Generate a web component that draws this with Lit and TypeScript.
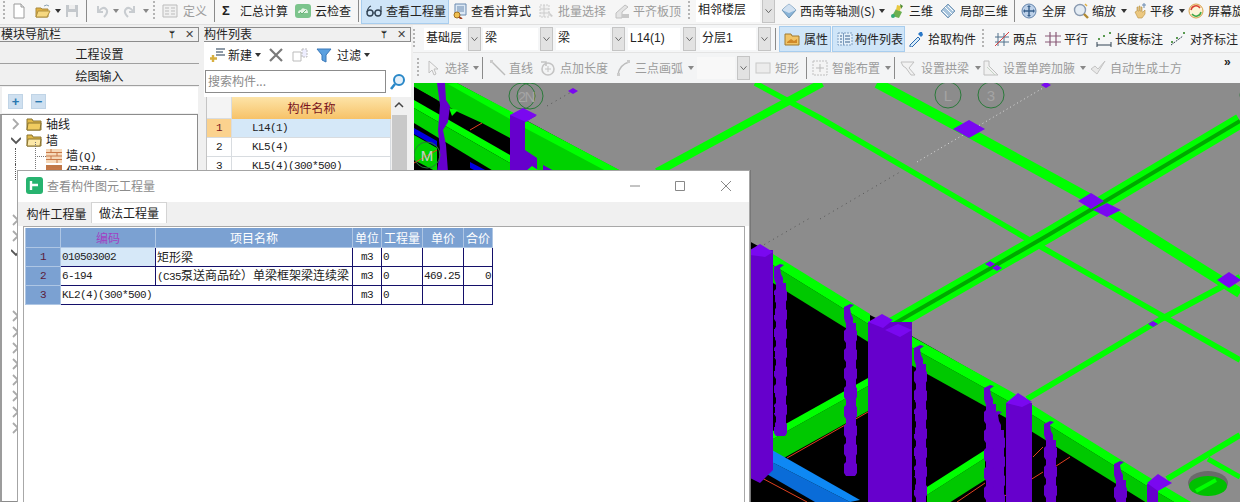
import { LitElement, css, html, svg } from 'lit'
import { customElement } from 'lit/decorators.js'

const icons: Record<string, any> = {
  new: svg`<path d="M3 1h7l3 3v11H3z" fill="#fff" stroke="#9a9a9a"/><path d="M10 1v3h3" fill="#e8e8e8" stroke="#9a9a9a"/>`,
  open: svg`<path d="M1 5h5l1 1h6v8H1z" fill="#e0b040" stroke="#a88a40"/><path d="M3 8h12l-3 6H1z" fill="#f6d880" stroke="#b09040"/><path d="M9 3q3-2 5 0" fill="none" stroke="#8aa0b0"/>`,
  save: svg`<path d="M2 2h12v12H2z" fill="#c4c8cc"/><path d="M5 2h6v4H5z" fill="#eee"/><path d="M4 9h8v5H4z" fill="#f4f4f4"/>`,
  undo: svg`<path d="M4 3v6h5M5 8q4-5 7-2t-2 8" fill="none" stroke="#c8ccd0" stroke-width="2"/>`,
  redo: svg`<path d="M12 3v6H7M11 8Q7 3 4 6t2 8" fill="none" stroke="#c8ccd0" stroke-width="2"/>`,
  define: svg`<path d="M1 2h14v12H1z" fill="#f0f0f0" stroke="#bbb"/><path d="M3 5h4M3 8h4M3 11h4M9 5h4M9 8h4M9 11h4" stroke="#bbb"/>`,
  cloud: svg`<rect x="0" y="1" width="16" height="14" rx="3" fill="#7cc48c"/><path d="M3 10q0-3 3-3 1-3 4-1 3 0 3 4z" fill="#e4f4e4"/><path d="M5 9l2 2 4-4" fill="none" stroke="#6ab07a"/>`,
  glass: svg`<circle cx="4" cy="10" r="3" fill="none" stroke="#345" stroke-width="1.400"/><circle cx="12" cy="10" r="3" fill="none" stroke="#345" stroke-width="1.400"/><path d="M1 9q1-5 4-6M15 9V3M7 10h2" fill="none" stroke="#345" stroke-width="1.200"/>`,
  calc: svg`<path d="M3 1h11v11H3z" fill="#dce8f4" stroke="#6a8ab0"/><path d="M5 4h7M5 6h7M5 8h7" stroke="#6a8ab0"/><circle cx="5" cy="12" r="3" fill="#f0c050" stroke="#a07020"/><path d="M7 14l3 2" stroke="#a04020" stroke-width="2"/>`,
  batch: svg`<path d="M2 2h9v12H2z" fill="#f2f2f2" stroke="#ccc" stroke-dasharray="2 1"/><path d="M2 6h9M2 10h9M6 2v12" stroke="#ccc"/><path d="M10 8l5 5-2 1z" fill="#ccc"/>`,
  level: svg`<path d="M2 10l9-8 3 2-6 5v6H2z" fill="#e4e4e4" stroke="#c0c0c0"/><path d="M8 11h7v4H8z" fill="#c8c8c8"/>`,
  cube: svg`<path d="M8 1l7 6-7 8-7-8z" fill="#8ab4d8" stroke="#6890b0"/><path d="M1 7l7 3 7-3-7-6z" fill="#d0e0f0"/>`,
  three: svg`<path d="M3 13l4-7 6 3-3 6z" fill="#6cb050"/><path d="M8 2l4 1-1 5-4-1z" fill="#e8c840"/><path d="M11 1l3 2-2 3z" fill="#4a8a30"/><circle cx="4" cy="13" r="2" fill="#3a7"/>`,
  local: svg`<path d="M8 1l7 7-7 7-7-7z" fill="#a8c4dc" stroke="#7a9ab8"/><path d="M5 4l7 7M3 8l5 5M8 3l5 5" stroke="#fff"/>`,
  full: svg`<circle cx="8" cy="8" r="7" fill="#bcd0e8" stroke="#6484ac"/><path d="M8 3v10M3 8h10" stroke="#38608c" stroke-width="1.400"/><path d="M8 2l2 2H6zM8 14l2-2H6zM2 8l2-2v4zM14 8l-2-2v4z" fill="#38608c"/>`,
  zoom: svg`<circle cx="7" cy="7" r="5.500" fill="#e4ecf4" stroke="#8a9ab0" stroke-width="1.400"/><path d="M11 11l4 4" stroke="#b08830" stroke-width="2.400"/><path d="M12 1l2 2" stroke="#e0b040" stroke-width="1.500"/>`,
  pan: svg`<path d="M3 9l2-1V4h1v4h1V3h1v5h1V4h1v5h1l2-2v4l-3 4H6z" fill="#ecc880" stroke="#b89040" stroke-width=".6"/><path d="M12 0v5M10 2h4" stroke="#6a8ab0"/>`,
  rotate: svg`<circle cx="8" cy="8" r="7" fill="#fdf4d8" stroke="#d8a048"/><path d="M3 7a5 5 0 0 1 9-2" fill="none" stroke="#d84030" stroke-width="1.500"/><path d="M13 9a5 5 0 0 1-9 2" fill="none" stroke="#40a848" stroke-width="1.500"/>`,
  attr: svg`<path d="M1 3h6l1 2h7v9H1z" fill="#f0c468" stroke="#a07a30"/><path d="M3 11l4-3 3 2 3-2v4H3z" fill="#d08828"/>`,
  list: svg`<path d="M1 2h14v12H1z" fill="#e4f0fa" stroke="#7a9cc0" stroke-dasharray="2 1"/><path d="M3 5h2M3 8h2M3 11h2M8 5h5M8 8h5M8 11h5" stroke="#38608c"/><path d="M6.500 2v12" stroke="#7a9cc0"/>`,
  pick: svg`<path d="M2 14l8-8 2 2-8 8H2z" fill="#d8ecfa" stroke="#2a6ab0"/><path d="M10 3l3 3 2-2-1-3h-2z" fill="#2a78c8"/>`,
  twopt: svg`<path d="M4 2v13M10 2v13M1 6h14M1 11h14" stroke="#50708c"/><path d="M1 15L15 1" stroke="#d84040"/>`,
  para: svg`<path d="M5 1v14M11 1v14M0 5h16M0 11h16" stroke="#8a5a78" stroke-width="1.200"/>`,
  len: svg`<path d="M1 14h14M1 11v5M15 11v5" stroke="#345"/><rect x="2" y="7" width="2" height="2" fill="#5a9a50"/><rect x="7" y="4" width="2" height="2" fill="#5a9a50"/><rect x="13" y="1" width="2" height="2" fill="#5a9a50"/>`,
  align: svg`<path d="M1 14L13 5" stroke="#345" stroke-dasharray="2 1"/><rect x="1" y="10" width="2" height="2" fill="#5a9a50"/><rect x="6" y="6" width="2" height="2" fill="#5a9a50"/><rect x="13" y="1" width="2" height="2" fill="#5a9a50"/>`,
  select: svg`<path d="M3 1v12l3-3 2 5 2-1-2-5h4z" fill="#f4f4f4" stroke="#c0c0c0"/>`,
  line: svg`<path d="M1 1l14 14" stroke="#bbb" stroke-width="1.400"/><path d="M0 0h3v3H0z" fill="#ccc"/>`,
  plen: svg`<circle cx="8" cy="9" r="6" fill="none" stroke="#c4c4c4" stroke-width="1.600"/><path d="M8 6v6M5 9h6" stroke="#c4c4c4"/><path d="M1 2h5v4" fill="none" stroke="#c4c4c4" stroke-width="1.600"/>`,
  arc: svg`<path d="M2 15Q3 5 13 2" fill="none" stroke="#bbb" stroke-width="1.400"/><rect x="11" y="0" width="3" height="3" fill="#ccc"/><rect x="1" y="13" width="3" height="3" fill="#ccc"/>`,
  rect: svg`<rect x="1" y="3" width="14" height="10" fill="#ececec" stroke="#c8c8c8"/>`,
  smart: svg`<rect x="1" y="1" width="14" height="14" fill="#f4f4f4" stroke="#c0c0c0" stroke-dasharray="2 1"/><path d="M8 4v8M4 8h8" stroke="#bbb"/>`,
  arch: svg`<path d="M1 2h13l-5 6 6 7h-4L6 8 3 6z" fill="#f2f2f2" stroke="#c0c0c0"/>`,
  haunch: svg`<path d="M1 1h5v5l9 9H1z" fill="#f0f0f0" stroke="#c0c0c0"/><path d="M4 7l8 8" stroke="#c4d4c4"/>`,
  soil: svg`<path d="M1 9l6 5 8-13-7 8-3-3z" fill="#e8e8e8" stroke="#c4c4c4"/>`,
}

const ic = (x: number, name: string) => ({ x, t: 'i', name })
const tx = (x: number, text: string, off = false) => ({ x, t: 't', text, off })
const ca = (x: number, off = false) => ({ x, t: 'c', off })
const sep = (x: number) => ({ x, t: 's' })
const grip = (x: number) => ({ x, t: 'g' })
const sigma = (x: number) => ({ x, t: 'sigma' })
const combo = (x: number, text: string, w: number, aw = 13, off = false, gap = 2) => ({ x, t: 'combo', text, w, aw, off, gap })
const on = (x: number, w: number, kids: any[]) => ({ x, t: 'on', w, kids })

const rowA = [
  grip(3), ic(11, 'new'), ic(35, 'open'), ca(55), ic(64, 'save'), sep(86), ic(94, 'undo'), ca(113, true), ic(122, 'redo'), ca(143, true),
  grip(153), ic(162, 'define'), tx(183, '定义', true), sep(214), sigma(222), tx(240, '汇总计算'), ic(295, 'cloud'), tx(315, '云检查'), sep(358),
  on(361, 88, [ic(4, 'glass'), tx(24, '查看工程量')]),
  ic(452, 'calc'), tx(471, '查看计算式'), ic(538, 'batch'), tx(558, '批量选择', true), ic(614, 'level'), tx(633, '平齐板顶', true), grip(688),
  combo(696, '相邻楼层', 64), ic(781, 'cube'), tx(800, '西南等轴测(S)'), ca(879), ic(889, 'three'), tx(909, '三维'), ic(940, 'local'), tx(960, '局部三维'),
  sep(1014), ic(1021, 'full'), tx(1042, '全屏'), ic(1073, 'zoom'), tx(1092, '缩放'), ca(1121), ic(1132, 'pan'), tx(1150, '平移'), ca(1179), ic(1188, 'rotate'), tx(1208, '屏幕旋转'),
]
const rowB = [
  grip(413), combo(424, '基础层', 42), combo(483, '梁', 55), combo(556, '梁', 54), combo(628, 'L14(1)', 52, 13, false, 3), combo(700, '分层1', 56),
  sep(775),
  on(779, 52, [ic(4, 'attr'), tx(24, '属性')]), on(832, 73, [ic(4, 'list'), tx(22, '构件列表')]),
  ic(908, 'pick'), tx(928, '拾取构件'), grip(982), ic(994, 'twopt'), tx(1013, '两点'), ic(1045, 'para'), tx(1064, '平行'), ic(1096, 'len'), tx(1115, '长度标注'), ic(1170, 'align'), tx(1190, '对齐标注'),
]
const rowC = [
  grip(417), ic(426, 'select'), tx(445, '选择', true), ca(473, true), sep(482), ic(490, 'line'), tx(509, '直线', true), ic(540, 'plen'), tx(560, '点加长度', true), ic(616, 'arc'), tx(635, '三点画弧', true), ca(688, true),
  combo(697, '', 38, 13, true), ic(755, 'rect'), tx(775, '矩形', true), sep(806), ic(812, 'smart'), tx(832, '智能布置', true), ca(885, true), sep(894), ic(900, 'arch'), tx(921, '设置拱梁', true), ca(975, true),
  ic(983, 'haunch'), tx(1003, '设置单跨加腋', true), ca(1080, true), ic(1090, 'soil'), tx(1110, '自动生成土方', true),
]

// viewport pieces: each piece takes the room up to the next one
function piece(p: any, w: number) {
  const st = `width:${w}px`
  switch (p.t) {
    case 'i': return html`<span class="pc" style=${st}><svg class="ico" viewBox="0 0 16 16">${icons[p.name]}</svg></span>`
    case 't': return html`<span class="pc ${p.off ? 'off' : ''}" style=${st}>${p.text}</span>`
    case 'c': return html`<span class="pc" style=${st}><i class="caret ${p.off ? 'coff' : ''}"></i></span>`
    case 's': return html`<span class="pc" style=${st}><i class="sep"></i></span>`
    case 'g': return html`<span class="pc" style=${st}><i class="grip"></i></span>`
    case 'sigma': return html`<span class="pc sigma" style=${st}>Σ</span>`
    case 'combo': return html`<span class="pc" style=${st}>
      <span class="cb ${p.off ? 'cboff' : ''}" style="width:${p.w}px">${p.text}</span>
      <span class="cbarrow" style="margin-left:${p.gap}px"><svg viewBox="0 0 13 24"><path d="M3 10l3.500 4L10 10" fill="none" stroke="#555"/></svg></span>
    </span>`
    case 'on': return html`<span class="pc" style=${st}><span class="on" style="width:${p.w}px">${row(p.kids, p.w)}</span></span>`
  }
  return ''
}
function row(items: any[], end: number) {
  return items.map((p, i) => {
    const next = i + 1 < items.length ? items[i + 1].x : end
    const lead = i == 0 ? html`<span class="pc" style="width:${p.x}px"></span>` : ''
    return html`${lead}${piece(p, next - p.x)}`
  })
}

// lumpy rebar stack on the columns
function rebar(x: number, y1: number, y2: number) {
  const parts = [svg`<path d="M${x + 1} ${y1 + 2}l6-3 4 1-4 3 1 6 2 4v6h-7l-2-6z" fill="#6600cc"/>`]
  parts.push(svg`<rect x=${x + 3} y=${y1 + 18} width="10" height=${y2 - y1 - 18} fill="#6600cc"/>`)
  for (let y = y1 + 24, i = 0; y < y2 - 4; y += 19, i++) {
    parts.push(svg`<path d="M${x + 1} ${y + 2}l2-2h8l3 2v9l-2 3h-9l-2-3z" fill="#6600cc"/>`)
  }
  return parts
}
function band(x1: number, y1: number, x2: number, y2: number, top: number, h: number) {
  return svg`<polygon points="${x1},${y1 + top} ${x2},${y2 + top} ${x2},${y2 + h} ${x1},${y1 + h}" fill="#00c800"/>
    <polygon points="${x1},${y1} ${x2},${y2} ${x2},${y2 + top} ${x1},${y1 + top}" fill="#00ff00"/>`
}
const diamond = (x: number, y: number, rx: number, ry: number, fill = '#7a08f0') =>
  svg`<polygon points="${x - rx},${y} ${x},${y - ry} ${x + rx},${y} ${x},${y + ry}" fill=${fill}/>`
const tag = (x: number, y: number, t: string) =>
  svg`<circle cx=${x} cy=${y} r="13" fill="none" stroke="#2a7a3a"/><text x=${x} y=${y + 6} text-anchor="middle" class="axis">${t}</text>`

const treeRows = [
  { chev: 'r', folder: 1, text: '轴线' },
  { chev: 'd', folder: 2, text: '墙' },
  { brick: 1, text: '墙(Q)' },
  { brick: 2, text: '保温墙(Q)' },
  {}, {},
  { chev: 'r' }, { chev: 'r' }, { chev: 'd' },
  {}, {}, {},
  { chev: 'r' }, { chev: 'r' }, { chev: 'r' }, { chev: 'r' }, { chev: 'r' }, { chev: 'r' }, { chev: 'r' }, { chev: 'r' },
]

@customElement('app-root')
export class AppRoot extends LitElement {
  static styles = css`
    :host {
      display: block;
      position: relative;
      width: 1240px;
      height: 502px;
      overflow: hidden;
      background: #f0f0f0;
      font: 12px/16px "Noto Sans CJK SC", sans-serif;
      color: #222;
    }
    .bar {
      display: flex;
      align-items: center;
      flex: none;
      white-space: nowrap;
      overflow: hidden;
    }
    .top { height: 25px; background: #f6f6f6; border-bottom: 1px solid #e0e0e0; box-sizing: border-box; padding-bottom: 3px; }
    .pc {
      display: flex;
      align-items: center;
      flex: none;
      height: 22px;
      overflow: visible;
      white-space: nowrap;
    }
    .off { color: #9c9c9c; }
    .ico { width: 16px; height: 16px; display: block; }
    .caret { width: 0; height: 0; border: 3.500px solid transparent; border-top: 4px solid #333; border-bottom: 0; }
    .coff { border-top-color: #888; }
    .sep { width: 1px; height: 22px; background: #8a8a8a; }
    .grip { width: 2px; height: 20px; background: repeating-linear-gradient(#b4b4b4 0 2px, transparent 2px 4px); }
    .sigma { font: bold 13px "Liberation Sans", sans-serif; }
    .cb {
      height: 22px;
      line-height: 21px;
      background: #fff;
      padding-left: 2px;
      box-sizing: border-box;
      font-family: "Liberation Sans", "Noto Sans CJK SC", sans-serif;
    }
    .cboff { background: #f8f8f8; }
    .cbarrow { width: 13px; height: 24px; background: #e2e2e2; border: 1px solid #c4c4c4; box-sizing: border-box; display: block; flex: none; }
    .cbarrow svg { width: 100%; height: 100%; display: block; }
    .on {
      display: flex;
      align-items: center;
      height: 26px;
      background: #cfe5f8;
      box-sizing: border-box;
      border: 1px solid #a8cdee;
    }
    .main { display: flex; height: 477px; }
    .nav { width: 199px; flex: none; margin-top: 2px; display: flex; flex-direction: column; box-sizing: border-box; }
    .title {
      height: 13px;
      line-height: 13px;
      display: flex;
      align-items: center;
      background: #f0f0f0;
      border: 1px solid #8c8c8c;
      border-left-width: 0;
      flex: none;
    }
    .title span { flex: 1; margin-left: 1px; margin-top: -2px; }
    .title b { font: bold 10px "Liberation Sans", sans-serif; width: 16px; text-align: center; }
    .title em { font: 11px "Liberation Sans", sans-serif; width: 18px; text-align: center; color: #444; }
    .navbtn {
      height: 21px;
      line-height: 23px;
      text-align: center;
      background: #f0f0f0;
      border-bottom: 1px solid #a0a0a0;
      flex: none;
    }
    .pm { height: 24px; background: #fff; display: flex; align-items: center; gap: 8px; padding: 2px 0 0 6px; flex: none; margin: 1px 1px 0 2px; }
    .pm i {
      width: 15px;
      height: 15px;
      background: #cfe0f0;
      border: 1px solid #c0d4e6;
      box-sizing: border-box;
      display: flex;
      align-items: center;
      justify-content: center;
      font: bold 13px/13px "Liberation Sans", sans-serif;
      color: #2a78b0;
    }
    .tree { flex: 1; background: #fff; border: 1px solid #8c8c8c; border-left: 2px solid #9c9c9c; margin: 1px 1px 0 0; padding-top: 1px; }
    .tr { height: 16px; display: flex; align-items: center; position: relative; }
    .chev { width: 10px; height: 16px; margin-left: 9px; flex: none; }
    .chev svg { display: block; }
    .leaf { margin-left: 44px; }
    .tr.kid::before { content: ''; position: absolute; left: 13px; top: 0; bottom: 0; border-left: 1px dotted #555; }
    .tr.kid::after { content: ''; position: absolute; left: 33px; top: -6px; height: 14px; width: 10px; border-left: 1px dotted #777; border-bottom: 1px dotted #777; }
    .tr svg.fold { width: 16px; height: 14px; margin: 0 4px 0 5px; flex: none; }
    .tr svg.brick { width: 16px; height: 14px; margin-right: 4px; flex: none; }
    .mono { font: 11px/16px "Liberation Mono", "Noto Sans CJK SC", monospace; letter-spacing: -0.6px; }
    .tr .cjk { font-size: 12px; letter-spacing: 0; font-family: "Noto Sans CJK SC", sans-serif; }
    .list { width: 207px; margin-left: 5px; flex: none; margin-top: 2px; display: flex; flex-direction: column; }
    .title.lt span { margin-left: 0; }
    .ltools { height: 25px; background: #fff; display: flex; align-items: center; flex: none; padding-left: 6px; }
    .search { display: flex; align-items: flex-start; height: 30px; background: #fff; flex: none; padding-top: 3px; box-sizing: border-box; }
    .search div { width: 177px; height: 21px; margin-left: 1px; border: 1px solid #8c8c8c; line-height: 20px; color: #8a8a8a; padding-left: 2px; background: #fff; }
    .search svg { width: 18px; height: 18px; margin: 3px 0 0 3px; }
    .lgrid { flex: 1; background: #fff; border-left: 1px solid #c4c4c4; margin: 0 2px 0 2px; display: grid; grid-template-columns: 25px 159px 1fr; grid-template-rows: 22px 19px 19px 19px 1fr; }
    .lgrid > div { border-bottom: 1px solid #d8dce0; border-right: 1px solid #d8dce0; line-height: 18px; }
    .lh { background: #f4f4f4; }
    .ln { background: linear-gradient(#fde4a8, #f7c268); color: #7a1420; text-align: center; line-height: 21px !important; border: 0 !important; }
    .rn { text-align: center; background: #fff; }
    .rn.sel { background: #fbd28e; color: #7a1420; }
    .cell { padding-left: 20px; }
    .cell.sel { background: #d5e8f8; }
    .sb { background: #f0f0f0; grid-column: 3; grid-row: 1 / 6; border: 0 !important; position: relative; }
    .sb::before { content: ''; position: absolute; left: 1px; right: 2px; top: 18px; bottom: 0; background: #c8c8c8; }
    .sb svg { position: absolute; left: 2px; top: 4px; }
    .filler { grid-column: 1 / 3; border: 0 !important; }
    .right { flex: 1; min-width: 0; margin-left: 2px; display: flex; flex-direction: column; }
    .tb2 { height: 28px; padding-top: 1px; background: #f5f6f7; border-bottom: 1px solid #e4e4e4; box-sizing: border-box; }
    .tb3 { height: 30px; background: #f3f4f5; box-sizing: border-box; }
    .canvas { display: block; margin-left: 1px; width: 826px; height: 419px; background: #000; flex: none; }
    .axis { font: 15px "Liberation Sans", sans-serif; fill: #a4a4a4; }
    .axis.m { fill: #ccc; }
    .more { margin-top: -12px; font: bold 12px "Liberation Sans", sans-serif; color: #222; }
    .dlg {
      position: absolute;
      left: 17px;
      top: 170px;
      width: 733px;
      height: 340px;
      background: #fff;
      border: 1px solid #a4a4a4;
      box-sizing: border-box;
      display: flex;
      flex-direction: column;
      box-shadow: 1px 0 0 #777;
    }
    .dt { height: 31px; display: flex; align-items: center; flex: none; color: #8c8c8c; padding: 0 0 2px 8px; box-sizing: border-box; }
    .dt .name { margin-left: 4px; flex: 1; }
    .dt svg.logo { width: 17px; height: 17px; }
    .dt svg.wb { width: 102px; height: 12px; flex: none; margin: 1px 17px 0 0; }
    .strip { height: 24px; background: #f0f0f0; display: flex; align-items: flex-start; padding-left: 4px; flex: none; }
    .tab { height: 20px; width: 69px; text-align: center; line-height: 20px; margin-top: 2px; }
    .tab.act { background: #fff; width: 76px; height: 21px; line-height: 19px; margin-top: 0; border: 1px solid #d4d4d4; border-bottom: 0; box-sizing: border-box; }
    .content { flex: 1; margin: 0 4px 0 5px; border: 1px solid #a8a8a8; border-bottom: 0; padding: 1px; background: #fff; }
    table { border-collapse: collapse; table-layout: fixed; width: 467px; }
    td, th { border: 1px solid #14106a; height: 18px; padding: 0; font-weight: normal; white-space: nowrap; overflow: hidden; line-height: 16px; }
    th { background: #7ba1d2; color: #fff; border: 1px solid #aec6e4; height: 19px; border-top: 0; line-height: 14px; }
    th.code { color: #a23fc2; }
    td.rh { background: #7ba1d2; text-align: center; color: #5a1a3a; border-color: #aec6e4; }
    td.sel { background: #d6e8f8; }
    td.u { text-align: center; }
    td.l { padding-left: 1px; }
    td.r { text-align: right; padding-right: 1px; }
  `

  render() {
    return html`
      <div class="bar top">${row(rowA, 1300)}</div>
      <div class="main">
        <div class="nav">
          <div class="title"><span>模块导航栏</span><b>ᛘ</b><em>✕</em></div>
          <div class="navbtn">工程设置</div>
          <div class="navbtn">绘图输入</div>
          <div class="pm"><i>+</i><i>−</i></div>
          <div class="tree">${treeRows.map(r => this.treeRow(r))}</div>
        </div>
        <div class="list">
          <div class="title lt"><span>构件列表</span><b>ᛘ</b><em>✕</em></div>
          <div class="ltools">
            <svg class="ico" viewBox="0 0 16 16"><path d="M6 2h9M6 5h7M6 8h9" stroke="#6a7a8a" stroke-width="1.400"/><path d="M3 8v7M0 11.500h7" stroke="#d8b040" stroke-width="2.400"/></svg>
            <span style="margin-left:2px">新建</span><i class="caret" style="margin-left:3px"></i>
            <svg class="ico" viewBox="0 0 16 16" style="margin-left:7px"><path d="M2 2l12 12M14 2L2 14" stroke="#7a7a7a" stroke-width="2.200"/></svg>
            <svg class="ico" viewBox="0 0 16 16" style="margin-left:8px"><path d="M1 5h8v9H1z" fill="#fff" stroke="#bbb"/><path d="M10 2h5v8h-5z" fill="#eef" stroke="#bbb" stroke-dasharray="2 1"/></svg>
            <svg class="ico" viewBox="0 0 16 16" style="margin-left:8px"><path d="M1 2h14L10 8v7l-4-2V8z" fill="#5aa0e0" stroke="#3a78b8"/></svg>
            <span style="margin-left:5px">过滤</span><i class="caret" style="margin-left:3px"></i>
          </div>
          <div class="search">
            <div>搜索构件...</div>
            <svg viewBox="0 0 18 18"><circle cx="10" cy="7" r="5" fill="#e4f0fa" stroke="#2a88c8" stroke-width="2"/><path d="M6 11l-4 5" stroke="#2a88c8" stroke-width="2.600"/></svg>
          </div>
          <div class="lgrid">
            <div class="lh"></div><div class="ln">构件名称</div>
            <div class="sb"><svg width="12" height="8" viewBox="0 0 12 8"><path d="M2 6l4-4 4 4" fill="none" stroke="#444" stroke-width="1.500"/></svg></div>
            <div class="rn sel mono">1</div><div class="cell sel mono">L14(1)</div>
            <div class="rn mono">2</div><div class="cell mono">KL5(4)</div>
            <div class="rn mono">3</div><div class="cell mono">KL5(4)(300*500)</div>
            <div class="filler"></div>
          </div>
        </div>
        <div class="right">
          <div class="bar tb2">${row(rowB.map(p => ({ ...p, x: p.x - 413 })), 827)}</div>
          <div class="bar tb3">${row(rowC.map(p => ({ ...p, x: p.x - 413 })), 811)}<span class="more">»</span></div>
          ${this.canvas()}
        </div>
      </div>
      ${this.dialog()}
    `
  }

  treeRow(r: any) {
    const chev = r.chev == 'r'
      ? html`<svg width="10" height="16" viewBox="0 0 10 16"><path d="M2 3l5 5-5 5" fill="none" stroke="#aaa" stroke-width="1.800"/></svg>`
      : r.chev == 'd'
        ? html`<svg width="10" height="16" viewBox="0 0 10 16"><path d="M0 6l5 5 5-5" fill="none" stroke="#555" stroke-width="1.800"/></svg>`
        : ''
    const folder = r.folder
      ? html`<svg class="fold" viewBox="0 0 16 14"><path d="M1 2h5l1 2h8v9H1z" fill="#e0b848" stroke="#8a7430"/><path d="M2 6h13l-1 7H1z" fill=${r.folder == 2 ? '#fce8a8' : '#f0cc60'} stroke="#8a7430"/></svg>`
      : ''
    if (r.brick) {
      return html`<div class="tr kid"><span class="leaf"></span>
        <svg class="brick" viewBox="0 0 16 14"><path d="M0 0h16v14H0z" fill=${r.brick == 1 ? '#f6d8b8' : '#c07848'}/><path d="M0 3.500h16M0 7h16M0 10.500h16M5 0v3.500M11 3.500V7M5 7v3.500M11 10.500V14" stroke="#c87848"/></svg>
        <span class="mono">${this.cjk(r.text)}</span></div>`
    }
    return html`<div class="tr"><span class="chev">${chev}</span>${folder}${r.text ?? ''}</div>`
  }

  cjk(s: string) {
    const m = s.match(/^([^(]+)(\(.*)$/)
    return m ? html`<span class="cjk">${m[1]}</span>${m[2]}` : s
  }

  canvas() {
    return html`<svg class="canvas" viewBox="414 83 826 419">
      <polygon points="457,83 760,247 870,315 910,335 1010,392 1147,477 1240,532 1240,83" fill="#8c8c8c"/>
      <!-- floor beams -->
      <g fill="none" stroke="#00ff00">
        <path d="M877 83L970 133L1087 197L1240 293" stroke-width="10"/>
        <path d="M755 83L820 118L1043 248L1240 360" stroke-width="5.500"/>
        <path d="M822 83L657 172" stroke-width="8"/>
        <path d="M1027 399L1163 318L1240 277" stroke-width="6"/>
        <path d="M1167 479L1240 435" stroke-width="6"/>
        <path d="M1208 459L1240 477" stroke-width="5"/>
        <path d="M892 325L1050 234L1240 121" stroke-width="15"/>
        <path d="M892 325L1050 234L1240 121" stroke="#00a800" stroke-width="4"/>
      </g>
      <path d="M820 219L900 172" stroke="#555" stroke-dasharray="1 4" fill="none"/>
      <path d="M917 162L1043 88" stroke="#ddd" stroke-dasharray="1 3" fill="none"/>
      <path d="M547 106L573 91M760 247L810 218" stroke="#555" stroke-dasharray="1 4" fill="none"/>
      ${diamond(573, 91, 5, 3)}${diamond(969, 129, 16, 9)}${diamond(1046, 85, 5, 3)}
      ${diamond(1091, 201, 13, 8)}${diamond(1107, 210, 14, 7)}
      ${diamond(990, 264, 5, 3)}${diamond(997, 268, 5, 3)}${diamond(1153, 324, 5, 3)}${diamond(1229, 280, 12, 8)}
      ${tag(522, 96, '2')}${tag(530, 96, 'N')}${tag(948, 95, 'L')}${tag(991, 95, '3')}${tag(1253, 95, '')}
      <!-- upper-left beams -->
      <polygon points="414,83 457,83 510,113 525,120 623,172 536,172 510,138 482,123 458,112 437,100 414,87" fill="#00d200"/>
      <polygon points="457,83 512,112 525,120 623,172 608,172 525,128 510,119 448,84" fill="#00ff00"/>
      <polygon points="525,150 510,142 525,130 600,172 560,172" fill="#00d200"/>
      <polygon points="414,87 437,100 437,110 414,98" fill="#000"/>
      <polygon points="449,108 458,110 452,116" fill="#00ff00"/>
      <polygon points="414,100 510,155 510,163 414,108" fill="#00ff00"/>
      <polygon points="414,108 510,163 510,172 495,172 414,123" fill="#00d200"/>
      <polygon points="414,128 437,141 437,147 414,134" fill="#0000e0"/>
      <polygon points="470,162 487,171 478,172 470,168" fill="#0000e0"/>
      <polygon points="414,135 437,148 437,172 414,160" fill="#00d200"/>
      <path d="M414 163L437 150M470 130L482 123" stroke="#e04020" fill="none"/>
      <polygon points="437,83 445,83 446,100 450,106 448,122 443,130 446,145 448,172 437,172 440,150 438,130 440,105" fill="#6600cc"/>
      <polygon points="510,115 524,110 536,116 525,122 525,172 510,172" fill="#6600cc"/>
      <polygon points="510,115 523,108 537,115 526,122" fill="#7a08f0"/>
      <polygon points="525,150 537,158 537,172 525,172" fill="#6600cc"/>
      <polygon points="543,165 556,172 543,172" fill="#6600cc"/>
      <polygon points="525,172 532,166 538,170 538,172" fill="#00ff00"/>
      <circle cx="427" cy="155" r="13" fill="none" stroke="#2a7a3a"/>
      <text x="427" y="161" text-anchor="middle" class="axis m">M</text>
      <!-- lower beams, red axis lines -->
      ${band(773, 431, 868, 378, 8, 33)}
      ${band(927, 487, 985, 450, 8, 30)}
      <path d="M787 458L868 412M760 477L807 502M957 502L985 483M995 502L1043 472M1033 457L1043 447M1070 457L1050 470" stroke="#e04020" fill="none"/>
      <!-- front edge beam -->
      ${band(760, 246, 870, 314, 11, 29)}
      ${band(893, 326, 1010, 391, 11, 29)}
      ${band(1010, 391, 1147, 476, 10, 27)}
      ${band(1147, 476, 1240, 531, 10, 25)}
      <!-- hole -->
      <ellipse cx="1208" cy="483" rx="20" ry="12" fill="#6a6a6a"/>
      <ellipse cx="1208" cy="486" rx="19" ry="10" fill="#00c000"/>
      <path d="M1196 491L1216 480" stroke="#00ff00" stroke-width="4"/>
      <!-- blue beam under -->
      <polygon points="760,456 760,470 815,502 850,502" fill="#0a6cd8"/>
      <polygon points="760,456 772,450 860,500 850,502" fill="#0e88f4"/>
      <!-- columns -->
      <polygon points="750,250 773,250 773,470 760,483 750,478" fill="#6600cc"/>
      <polygon points="750,250 760,244 773,252 765,257 750,255" fill="#7a08f0"/>
      <rect x="868" y="322" width="44" height="190" fill="#6600cc"/>
      <polygon points="868,322 882,314 893,320 883,328" fill="#7a08f0"/>
      <polygon points="885,330 898,324 912,330 900,337" fill="#7a08f0"/>
      <rect x="1006" y="403" width="26" height="110" fill="#6600cc"/>
      <polygon points="1006,403 1018,393 1032,402 1022,407" fill="#7a08f0"/>
      <rect x="1147" y="484" width="11" height="30" fill="#6600cc"/>
      <polygon points="1147,483 1158,474 1172,483 1158,491" fill="#7a08f0"/>
      ${rebar(773, 265, 435)}${rebar(843, 305, 475)}${rebar(913, 346, 510)}${rebar(983, 386, 510)}${rebar(991, 412, 510)}${rebar(1043, 422, 510)}${rebar(1113, 462, 510)}
      <path d="M774 295V430M914 400V502" stroke="#000" stroke-width="2" stroke-dasharray="6 8" fill="none"/>
    </svg>`
  }

  dialog() {
    return html`<div class="dlg">
      <div class="dt">
        <svg class="logo" viewBox="0 0 17 17"><rect width="17" height="17" rx="3" fill="#27b36f"/><path d="M5 4v9M5 8h7" stroke="#fff" stroke-width="2.400" fill="none"/></svg>
        <span class="name">查看构件图元工程量</span>
        <svg class="wb" viewBox="0 0 102 12"><path d="M0 6h10M45.500 1.500h9v9h-9zM91 1l10 10M101 1L91 11" stroke="#888" fill="none"/></svg>
      </div>
      <div class="strip">
        <div class="tab">构件工程量</div>
        <div class="tab act">做法工程量</div>
      </div>
      <div class="content">
        <table>
          <colgroup><col style="width:35px"/><col style="width:95px"/><col style="width:197px"/><col style="width:29px"/><col style="width:41px"/><col style="width:41px"/><col style="width:29px"/></colgroup>
          <tr><th></th><th class="code">编码</th><th>项目名称</th><th>单位</th><th>工程量</th><th>单价</th><th>合价</th></tr>
          <tr><td class="rh mono">1</td><td class="sel l mono">010503002</td><td class="l">矩形梁</td><td class="u mono">m3</td><td class="l mono">0</td><td></td><td></td></tr>
          <tr><td class="rh mono">2</td><td class="l mono">6-194</td><td class="l"><span class="mono">(C35</span>泵送商品砼）单梁框架梁连续梁</td><td class="u mono">m3</td><td class="l mono">0</td><td class="l mono">469.25</td><td class="r mono">0</td></tr>
          <tr><td class="rh mono">3</td><td class="l mono" colspan="2">KL2(4)(300*500)</td><td class="u mono">m3</td><td class="l mono">0</td><td></td><td></td></tr>
        </table>
      </div>
    </div>`
  }
}
